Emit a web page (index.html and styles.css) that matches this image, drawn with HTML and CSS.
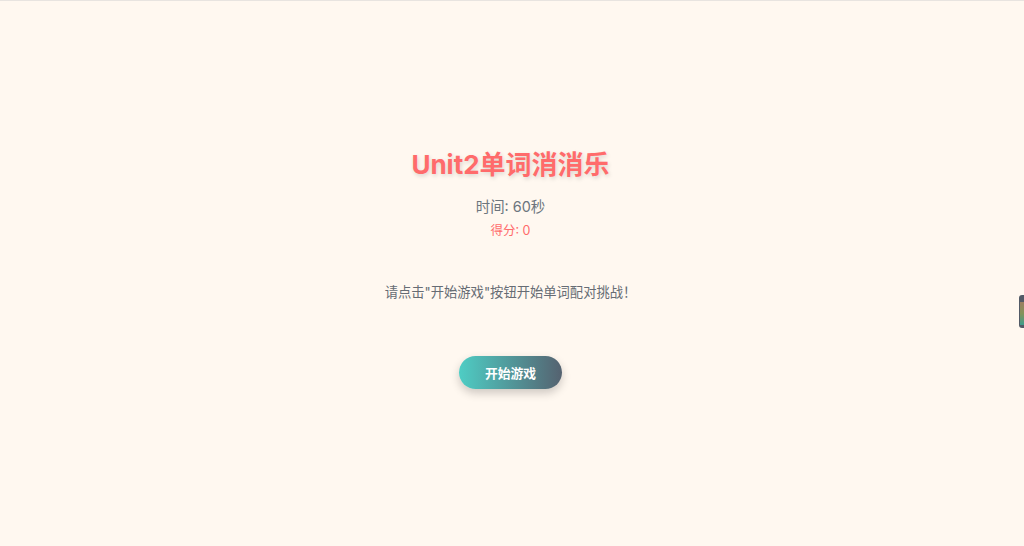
FILE: index.html
```html
<!DOCTYPE html>
<html lang="zh-CN">
<head>
    <meta charset="UTF-8">
    <meta name="viewport" content="width=device-width, initial-scale=1.0">
    <title>Unit2单词消消乐</title>
    <link rel="stylesheet" href="styles.css">
</head>
<body>
    <div class="container">
        <h1>Unit2单词消消乐</h1>
        <div class="timer">时间: 60秒</div>
        <div class="score">得分: 0</div>
        <p class="message">请点击"开始游戏"按钮开始单词配对挑战！</p>
        <button class="btn">开始游戏</button>
    </div>
    <!-- Side widget, cut off by the window edge -->
    <div class="side-widget">
        <div class="side-widget-bar"></div>
    </div>
</body>
</html>
```

FILE: styles.css
```css
:root {
    --background: #fff8f0;
    --primary: #ff6b6b;
    --text: #6c757d;
}

* {
    margin: 0;
    padding: 0;
    box-sizing: border-box;
    font-family: Inter, 'Noto Sans CJK SC', sans-serif;
}

body {
    background-color: var(--background);
    border-top: 1px solid #e8e4e0;
    height: 546px;
    overflow: hidden;
    padding-right: 3px;
    display: flex;
    justify-content: center;
}

.container {
    display: flex;
    flex-direction: column;
    align-items: center;
    padding-top: 149px;
}

h1 {
    color: var(--primary);
    font-size: 26px;
    line-height: 30px;
    font-weight: 700;
    text-shadow: 1px 2px 4px rgba(0, 0, 0, 0.15);
    margin-bottom: 17px;
}

.timer {
    color: var(--text);
    font-size: 14.4px;
    line-height: 20px;
    margin-bottom: 5px;
}

.score {
    color: var(--primary);
    font-size: 12.5px;
    line-height: 18px;
    margin-bottom: 42px;
}

.message {
    color: #666c74;
    font-size: 13.3px;
    line-height: 20px;
    margin-bottom: 54px;
}

.btn {
    width: 103px;
    height: 33px;
    border: none;
    border-radius: 17px;
    background: linear-gradient(90deg, #4ecdc4, #556270);
    color: white;
    font-size: 12.8px;
    font-weight: 700;
    box-shadow: 0 4px 10px rgba(0, 0, 0, 0.2);
}

.side-widget {
    position: absolute;
    top: 295px;
    left: 1019px;
    width: 8px;
    height: 33px;
    background: #525a66;
    border-radius: 3px;
    padding: 7px 0 3px 1px;
}

.side-widget-bar {
    height: 100%;
    background: linear-gradient(180deg, #9c7f62, #84935a, #3f9c8c);
}
```
